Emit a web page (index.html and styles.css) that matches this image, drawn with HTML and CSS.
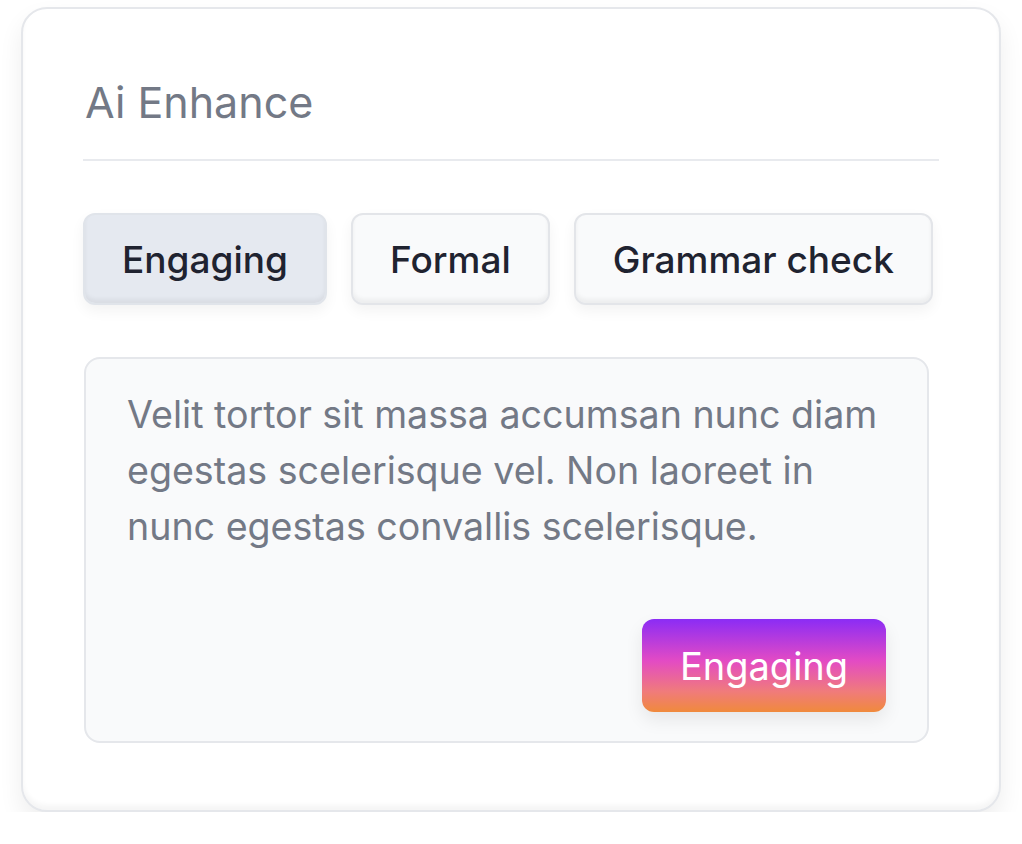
FILE: index.html
```html
<!DOCTYPE html>
<html>
<head>
<meta charset="utf-8">
<link rel="stylesheet" href="styles.css">
</head>
<body>
<div class="card">
  <h1 class="title">Ai Enhance</h1>
  <div class="divider"></div>
  <div class="tabs">
    <button class="tab active">Engaging</button>
    <button class="tab">Formal</button>
    <button class="tab">Grammar check</button>
  </div>
  <div class="box">
    <p class="text">Velit tortor sit massa accumsan nunc diam egestas scelerisque vel. Non laoreet in nunc egestas convallis scelerisque.</p>
    <div class="actions">
      <button class="cta">Engaging</button>
    </div>
  </div>
</div>
</body>
</html>
```

FILE: styles.css
```css
* { box-sizing: border-box; }
html, body { margin: 0; padding: 0; background: #ffffff; }
body {
  font-family: Inter, "Noto Sans", sans-serif;
  padding: 7px 21px 0 21px;
}
.card {
  width: 980px;
  height: 805px;
  border: 2px solid #e5e7eb;
  border-radius: 26px;
  background: #ffffff;
  box-shadow: inset 0 -5px 5px rgba(0,0,0,0.04), 0 12px 24px rgba(0,0,0,0.07);
  padding: 67px 60px 0 60px;
}
.title {
  margin: 0 0 0 2px;
  font-size: 43px;
  line-height: 52px;
  font-weight: 400;
  color: #737986;
}
.divider {
  height: 2px;
  background: #e8eaee;
  margin-top: 31px;
}
.tabs {
  display: flex;
  gap: 24px;
  margin-top: 52px;
}
.tab {
  flex-shrink: 0;
  white-space: nowrap;
  font-family: inherit;
  font-size: 37px;
  font-weight: 500;
  color: #1f2330;
  height: 92px;
  padding: 0 37px;
  border: 2px solid #e3e5e9;
  border-radius: 12px;
  background: #f9fafb;
  box-shadow: inset 0 -4px 4px rgba(0,0,0,0.05), 0 6px 14px rgba(0,0,0,0.05);
}
.tab.active {
  background: #e5e9f0;
  border-color: #e0e4ea;
}
.box {
  margin: 52px 10px 0 1px;
  height: 386px;
  border: 2px solid #e5e7eb;
  border-radius: 16px;
  background: #f9fafb;
  padding: 28px 40px 0 41px;
  display: flex;
  flex-direction: column;
}
.text {
  margin: 0;
  font-size: 37.6px;
  line-height: 56px;
  color: #737986;
}
.actions {
  display: flex;
  justify-content: flex-end;
  margin-top: 64px;
  padding-right: 1px;
}
.cta {
  font-family: inherit;
  font-size: 38px;
  font-weight: 400;
  color: #ffffff;
  width: 244px;
  height: 93px;
  border: none;
  border-radius: 12px;
  background: linear-gradient(180deg, #8b2cf5 0%, #e34bc4 45%, #f07b7b 78%, #f08a3c 100%);
  box-shadow: 0 8px 18px rgba(0,0,0,0.08);
}
```
